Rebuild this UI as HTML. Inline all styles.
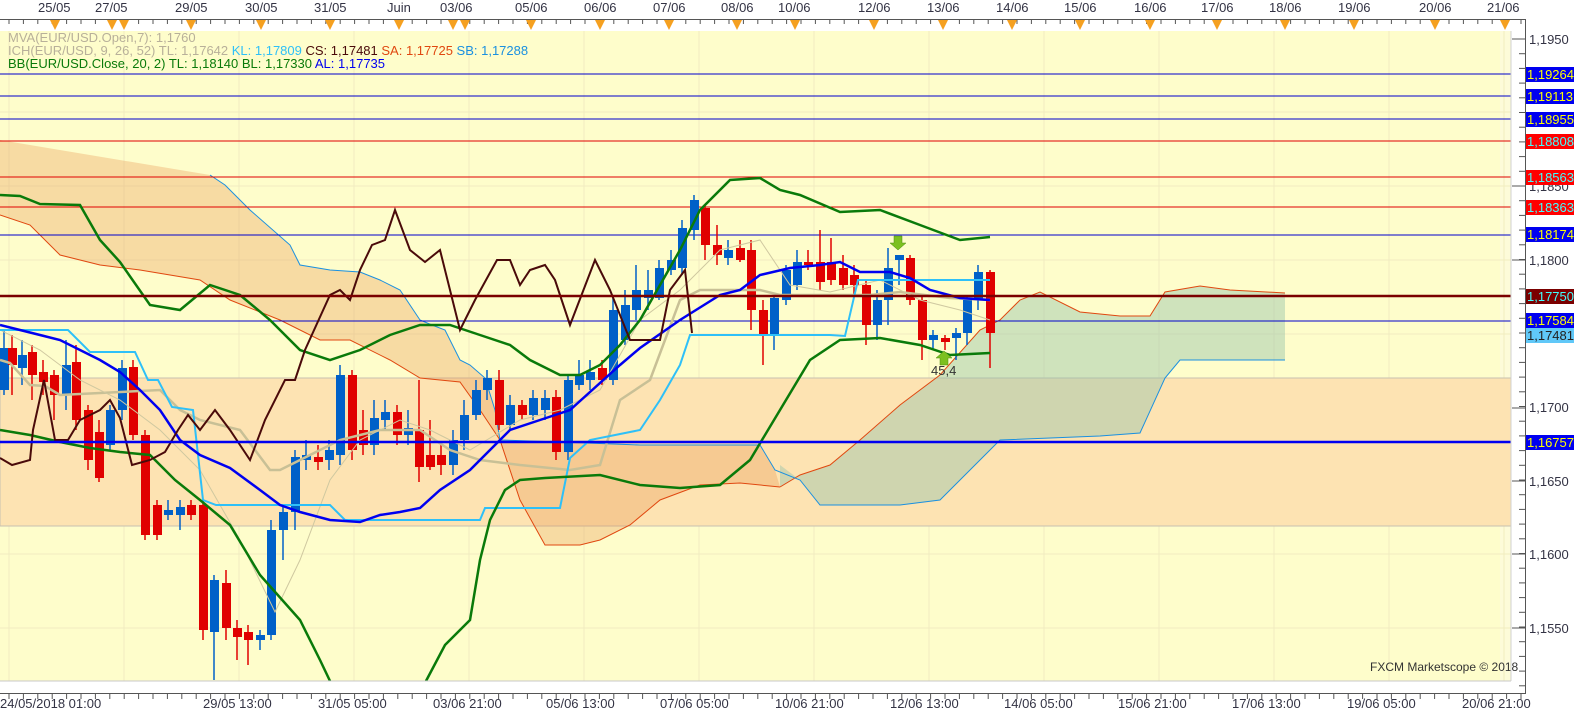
<!DOCTYPE html>
<html><head><meta charset="utf-8"><style>
html,body{margin:0;padding:0;background:#fff;width:1583px;height:720px;overflow:hidden}
svg{display:block;font-family:"Liberation Sans","DejaVu Sans",sans-serif}
</style></head><body>
<svg id="s" width="1583" height="720" xmlns="http://www.w3.org/2000/svg">
<rect x="0" y="0" width="1583" height="720" fill="#fff"/>
<rect x="0" y="31" width="1511" height="650" fill="#fefdcb"/>
<rect x="1500" y="31" width="11" height="650" fill="#fdfbd9"/>
<g stroke="#f1ecc0" stroke-width="1">
<line x1="0" y1="112" x2="1511" y2="112"/><line x1="0" y1="186" x2="1511" y2="186"/><line x1="0" y1="260" x2="1511" y2="260"/><line x1="0" y1="334" x2="1511" y2="334"/><line x1="0" y1="408" x2="1511" y2="408"/><line x1="0" y1="481" x2="1511" y2="481"/><line x1="0" y1="554" x2="1511" y2="554"/><line x1="0" y1="628" x2="1511" y2="628"/>
<line x1="9" y1="31" x2="9" y2="681"/><line x1="124" y1="31" x2="124" y2="681"/><line x1="239" y1="31" x2="239" y2="681"/><line x1="354" y1="31" x2="354" y2="681"/><line x1="469" y1="31" x2="469" y2="681"/><line x1="584" y1="31" x2="584" y2="681"/><line x1="699" y1="31" x2="699" y2="681"/><line x1="814" y1="31" x2="814" y2="681"/><line x1="929" y1="31" x2="929" y2="681"/><line x1="1044" y1="31" x2="1044" y2="681"/><line x1="1159" y1="31" x2="1159" y2="681"/><line x1="1274" y1="31" x2="1274" y2="681"/><line x1="1389" y1="31" x2="1389" y2="681"/><line x1="1504" y1="31" x2="1504" y2="681"/>
</g>
<rect x="0" y="378" width="1511" height="148" fill="#fde3b2" stroke="#c8c0b0" stroke-width="1"/>
<polygon fill="rgba(232,150,80,0.32)" points="0,140 210,175 225,185 250,210 290,245 300,265 330,270 360,272 380,280 400,290 420,320 432,325 445,330 460,360 470,365 485,378 495,410 500,440 560,442 600,442 640,445 700,445 760,445 775,470 780,487 740,483 700,485 660,500 630,525 600,540 580,545 545,545 520,500 500,440 480,410 460,382 420,378 390,360 350,340 320,340 280,320 230,300 200,280 140,270 100,265 60,255 30,225 0,215"/>
<polyline fill="none" stroke="#e04810" stroke-width="1" points="0,215 30,225 60,255 100,265 140,270 200,280 230,300 280,320 320,340 350,340 390,360 420,378 460,382 480,410 500,440 520,500 545,545 580,545 600,540 630,525 660,500 700,485 740,483 780,487"/>
<polygon fill="rgba(150,195,170,0.45)" points="780,487 800,475 830,465 860,440 900,405 940,375 980,330 1000,320 1020,300 1040,292 1080,312 1120,316 1150,316 1165,292 1200,286 1230,290 1285,293 1285,360 1180,360 1165,378 1140,433 1100,436 1000,440 970,470 940,500 900,505 860,505 820,505 800,480 780,465"/>
<polyline fill="none" stroke="#e04810" stroke-width="1" points="780,487 800,475 830,465 860,440 900,405 940,375 980,330 1000,320 1020,300 1040,292 1080,312 1120,316 1150,316 1165,292 1200,286 1230,290 1285,293"/>
<polyline fill="none" stroke="#1a90e0" stroke-width="1" points="210,175 225,185 250,210 290,245 300,265 330,270 360,272 380,280 400,290 420,320 432,325 445,330 460,360 470,365 485,378 495,410 500,440 560,442 640,445 760,445 775,470 800,480 820,505 900,505 940,500 970,470 1000,440 1100,436 1140,433 1165,378 1180,360 1285,360"/>
<line x1="0" y1="74" x2="1511" y2="74" stroke="#0000cc"/>
<line x1="0" y1="96" x2="1511" y2="96" stroke="#0000cc"/>
<line x1="0" y1="119" x2="1511" y2="119" stroke="#0000cc"/>
<line x1="0" y1="141" x2="1511" y2="141" stroke="#e00000"/>
<line x1="0" y1="177" x2="1511" y2="177" stroke="#e00000"/>
<line x1="0" y1="207" x2="1511" y2="207" stroke="#e00000"/>
<line x1="0" y1="235" x2="1511" y2="235" stroke="#0000cc"/>
<line x1="0" y1="321" x2="1511" y2="321" stroke="#0000cc"/>
<g id="candles"></g>
<polyline fill="none" stroke="#c8c096" stroke-width="2.5" points="0,360 10,363 30,385 45,386 60,395 100,393 160,390 180,410 200,420 240,430 270,470 280,470 300,460 340,440 380,430 420,430 450,450 480,460 520,465 570,470 600,465 620,400 650,380 680,300 700,290 730,290 760,290 780,295 840,295 870,295 900,292 950,298 990,300"/>
<polyline fill="none" stroke="#cfc8a0" stroke-width="1" points="0,330 40,350 80,380 120,400 160,430 200,470 240,540 275,612 300,560 330,480 360,440 400,420 430,430 470,450 520,420 560,410 600,390 640,320 680,290 720,250 760,240 790,285 830,292 880,280 920,300 960,310 990,320"/>
<polyline fill="none" stroke="#2ec0f8" stroke-width="2" points="0,330 68,330 90,352 135,352 148,380 158,380 172,407 193,410 203,500 216,505 330,505 345,520 480,520 485,508 560,508 570,458 590,440 640,430 660,400 680,365 690,335 730,335 830,335 845,336 858,280 990,280"/>
<polyline fill="none" stroke="#0000f0" stroke-width="2.5" points="0,325 20,330 40,335 60,340 80,350 100,360 120,372 140,390 160,410 180,440 200,455 230,468 260,490 280,505 300,512 330,520 360,522 380,515 400,512 420,508 440,490 470,470 490,450 510,430 540,420 570,410 590,392 620,365 640,348 680,320 720,295 740,290 760,275 790,268 820,265 840,262 860,272 890,272 910,278 930,290 960,298 990,300"/>
<polyline fill="none" stroke="#0a7a0a" stroke-width="2.5" points="0,195 20,196 40,204 80,205 100,240 120,262 150,305 180,310 210,285 240,295 270,320 300,350 330,360 360,350 390,335 420,325 450,325 480,335 510,345 530,360 560,375 580,375 600,365 620,345 640,320 660,285 680,250 700,210 730,180 760,178 780,190 800,195 840,212 880,210 920,225 960,240 990,237"/>
<polyline fill="none" stroke="#0a7a0a" stroke-width="2.5" points="0,430 30,435 60,442 90,448 120,452 150,455 175,480 200,500 230,525 260,575 300,620 320,660 330,681"/>
<polyline fill="none" stroke="#0a7a0a" stroke-width="2.5" points="426,681 445,645 470,620 480,560 490,520 505,490 520,480 545,478 600,475 640,485 680,488 720,485 750,460 780,410 810,360 840,340 880,338 920,345 950,355 990,353"/>
<polyline fill="none" stroke="#4a0a0a" stroke-width="2" points="0,458 12,465 30,460 33,430 44,380 55,440 68,440 80,420 100,410 110,400 120,418 132,465 150,460 165,452 178,430 188,415 200,430 215,410 230,430 250,460 265,420 285,380 295,380 305,350 330,295 340,290 350,300 360,270 372,245 385,240 395,210 410,250 425,262 440,250 460,330 475,300 497,260 510,260 520,285 530,270 545,265 555,280 570,325 595,260 610,290 630,340 645,340 660,340 670,290 685,270 692,333"/>
<polygon fill="#7cc020" stroke="#4a8a10" stroke-width="0.5" points="894,236 902,236 902,243 906,243 898,250 890,243 894,243"/>
<polygon fill="#7cc020" stroke="#4a8a10" stroke-width="0.5" points="944,351 952,358 948,358 948,365 940,365 940,358 936,358"/>
<text x="931" y="375" font-size="13" fill="#333">45,4</text>
<line x1="0" y1="296" x2="1511" y2="296" stroke="#7a0000" stroke-width="2.5"/>
<line x1="0" y1="442" x2="1511" y2="442" stroke="#0000f0" stroke-width="2.5"/>
<text x="8" y="42" font-size="13" fill="#b8b09a">MVA(EUR/USD.Open,7): 1,1760</text>
<text x="8" y="55" font-size="13"><tspan fill="#b8b09a">ICH(EUR/USD, 9, 26, 52)  TL: 1,17642 </tspan><tspan fill="#2ec0f8"> KL: 1,17809 </tspan><tspan fill="#4a0a0a"> CS: 1,17481 </tspan><tspan fill="#e04810"> SA: 1,17725 </tspan><tspan fill="#1a90e0"> SB: 1,17288</tspan></text>
<text x="8" y="68" font-size="13"><tspan fill="#0a7a0a">BB(EUR/USD.Close, 20, 2)  TL: 1,18140  BL: 1,17330 </tspan><tspan fill="#0000f0"> AL: 1,17735</tspan></text>
<text x="1370" y="671" font-size="12" fill="#333">FXCM Marketscope © 2018</text>
<line x1="0" y1="19.5" x2="1525" y2="19.5" stroke="#555"/>
<line x1="0" y1="693.5" x2="1525" y2="693.5" stroke="#555"/>
<line x1="1525.5" y1="19" x2="1525.5" y2="694" stroke="#555"/>
<line x1="0" y1="681" x2="1511" y2="681" stroke="#c8c8c8"/>
<line x1="1511" y1="31" x2="1511" y2="681" stroke="#d0d0d0"/>
<g id="ticks"></g>
<g font-size="13" fill="#334">
<text x="38" y="12">25/05</text><text x="95" y="12">27/05</text><text x="175" y="12">29/05</text><text x="245" y="12">30/05</text><text x="314" y="12">31/05</text><text x="387" y="12">Juin</text><text x="440" y="12">03/06</text><text x="515" y="12">05/06</text><text x="584" y="12">06/06</text><text x="653" y="12">07/06</text><text x="721" y="12">08/06</text><text x="778" y="12">10/06</text><text x="858" y="12">12/06</text><text x="927" y="12">13/06</text><text x="996" y="12">14/06</text><text x="1064" y="12">15/06</text><text x="1134" y="12">16/06</text><text x="1201" y="12">17/06</text><text x="1269" y="12">18/06</text><text x="1338" y="12">19/06</text><text x="1419" y="12">20/06</text><text x="1487" y="12">21/06</text>
</g>
<g font-size="13" fill="#334">
<text x="0" y="708">24/05/2018 01:00</text><text x="203" y="708">29/05 13:00</text><text x="318" y="708">31/05 05:00</text><text x="433" y="708">03/06 21:00</text><text x="546" y="708">05/06 13:00</text><text x="660" y="708">07/06 05:00</text><text x="775" y="708">10/06 21:00</text><text x="890" y="708">12/06 13:00</text><text x="1004" y="708">14/06 05:00</text><text x="1118" y="708">15/06 21:00</text><text x="1232" y="708">17/06 13:00</text><text x="1347" y="708">19/06 05:00</text><text x="1462" y="708">20/06 21:00</text>
</g>
<g font-size="13" fill="#334">
<text x="1529" y="44">1,1950</text><text x="1529" y="191">1,1850</text><text x="1529" y="265">1,1800</text><text x="1529" y="412">1,1700</text><text x="1529" y="486">1,1650</text><text x="1529" y="559">1,1600</text><text x="1529" y="633">1,1550</text>
</g>
<g font-size="13">
<rect x="1526" y="67" width="48" height="15" fill="#0000f0"/><text x="1527" y="79" fill="#ffff00">1,19264</text>
<rect x="1526" y="89" width="48" height="15" fill="#0000f0"/><text x="1527" y="101" fill="#ffff00">1,19113</text>
<rect x="1526" y="112" width="48" height="15" fill="#0000f0"/><text x="1527" y="124" fill="#ffff00">1,18955</text>
<rect x="1526" y="134" width="48" height="15" fill="#ff0000"/><text x="1527" y="146" fill="#40ffff">1,18808</text>
<rect x="1526" y="170" width="48" height="15" fill="#ff0000"/><text x="1527" y="182" fill="#40ffff">1,18563</text>
<rect x="1526" y="200" width="48" height="15" fill="#ff0000"/><text x="1527" y="212" fill="#40ffff">1,18363</text>
<rect x="1526" y="227" width="48" height="15" fill="#0000f0"/><text x="1527" y="239" fill="#ffff00">1,18174</text>
<rect x="1526" y="289" width="48" height="15" fill="#7a0000"/><text x="1527" y="301" fill="#40ffff">1,17750</text>
<rect x="1526" y="313" width="48" height="15" fill="#0000f0"/><text x="1527" y="325" fill="#ffff00">1,17584</text>
<rect x="1526" y="328" width="48" height="15" fill="#60c8f8"/><text x="1527" y="340" fill="#222">1,17481</text>
<rect x="1526" y="435" width="48" height="15" fill="#0000f0"/><text x="1527" y="447" fill="#ffff00">1,16757</text>
</g>
</svg>
<script>
var NS="http://www.w3.org/2000/svg",g=document.getElementById('candles');
var d=[[4,390,348,330,395],[12,348,365,335,395],[22,368,355,340,385],[32,352,375,345,400],[43,372,382,360,395],[54,375,395,370,420],[66,395,365,340,410],[76,362,420,345,430],[88,410,460,405,470],[99,432,478,420,482],[110,445,410,405,450],[122,410,368,360,420],[133,367,435,360,440],[145,435,535,430,540],[157,505,535,500,540],[168,515,510,500,520],[180,515,507,500,530],[191,505,515,500,520],[203,505,630,500,640],[214,632,580,575,680],[226,583,628,570,640],[237,628,637,620,660],[248,632,640,625,665],[260,640,635,630,650],[271,635,530,520,640],[283,530,512,505,560],[295,512,457,450,530],[306,460,455,440,470],[318,457,462,445,470],[329,460,450,440,470],[340,455,375,365,465],[352,375,450,370,460],[363,430,445,410,455],[374,445,418,400,455],[385,420,412,400,430],[397,412,435,405,445],[408,435,428,410,445],[419,430,467,380,482],[430,455,467,420,470],[441,455,465,445,475],[453,465,440,430,475],[464,440,415,400,450],[476,415,390,380,420],[487,390,378,370,400],[499,380,425,370,430],[510,425,405,395,430],[522,405,415,400,420],[533,415,398,390,420],[545,410,398,390,420],[556,397,452,390,460],[568,452,380,375,460],[579,385,375,360,390],[590,380,372,360,390],[602,368,380,360,385],[613,380,310,295,385],[625,340,305,290,345],[636,310,290,265,320],[648,298,290,270,310],[659,298,268,260,300],[671,270,260,250,275],[682,268,228,220,275],[694,230,200,195,240],[705,208,245,205,260],[717,245,255,225,265],[728,258,250,240,265],[740,248,260,240,262],[751,250,310,240,330],[763,310,335,300,365],[774,335,298,295,350],[786,300,270,265,305],[797,285,262,250,290],[808,262,265,250,270],[820,262,282,230,290],[831,262,280,238,285],[843,268,285,255,290],[854,275,285,265,295],[866,285,325,280,345],[877,325,300,290,340],[888,300,268,248,325],[899,260,255,255,285],[910,258,300,255,305],[922,300,340,295,360],[933,340,335,330,350],[945,338,342,335,350],[956,338,333,328,360],[967,333,300,295,345],[978,300,272,265,310],[990,272,333,270,368]];
d.forEach(function(c){var x=c[0],o=c[1],cl=c[2],up=cl<o,col=up?'#0060c8':'#e00000';
var l=document.createElementNS(NS,'line');l.setAttribute('x1',x);l.setAttribute('x2',x);l.setAttribute('y1',c[3]);l.setAttribute('y2',c[4]);l.setAttribute('stroke',col);l.setAttribute('stroke-width','1.5');g.appendChild(l);
var r=document.createElementNS(NS,'rect');var t=Math.min(o,cl),h=Math.max(2,Math.abs(o-cl));r.setAttribute('x',x-4);r.setAttribute('y',t);r.setAttribute('width',9);r.setAttribute('height',h);r.setAttribute('fill',col);g.appendChild(r);});
var tk=document.getElementById('ticks'),s='';
for(var x=9;x<1525;x+=14.4){s+='<line x1="'+x+'" y1="19" x2="'+x+'" y2="24" stroke="#555"/>';s+='<line x1="'+x+'" y1="694" x2="'+x+'" y2="699" stroke="#555"/>';}
[55,112,124,191,261,330,399,453,465,531,600,669,737,795,874,943,1012,1080,1150,1217,1285,1354,1435,1505].forEach(function(x){s+='<polygon points="'+(x-5)+',20 '+(x+5)+',20 '+x+',30" fill="#f5a020"/>';});
for(var y=39;y<694;y+=14.7){s+='<line x1="1519" y1="'+y+'" x2="1525" y2="'+y+'" stroke="#555"/>';}
[39,186,260,408,481,554,628].forEach(function(y){s+='<line x1="1512" y1="'+y+'" x2="1525" y2="'+y+'" stroke="#555"/>';});
tk.innerHTML=s;
</script>
</body></html>
